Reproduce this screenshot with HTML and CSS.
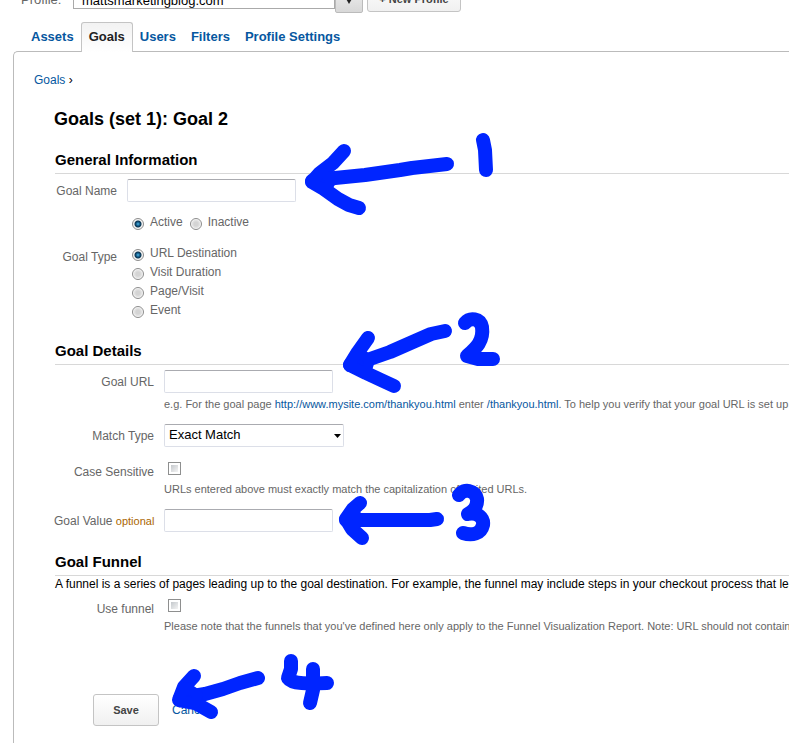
FILE: index.html
```html
<!DOCTYPE html>
<html lang="en">
<head>
    <meta charset="UTF-8">
    <meta name="viewport" content="width=device-width, initial-scale=1.0">
    <title>Goals (set 1): Goal 2</title>
    <link rel="stylesheet" href="styles.css">
</head>
<body>
    <div class="profile-bar">
        <label for="profile">Profile:</label>
        <div class="profile-picker">
            <input type="text" id="profile" value="mattsmarketingblog.com">
            <button type="button" class="picker-arrow" aria-label="Choose profile">
                <svg width="8" height="7" viewBox="0 0 8 7"><path d="M0 0h8L4 7z" fill="#222"/></svg>
            </button>
        </div>
        <button type="button" class="btn btn-new">+ New Profile</button>
    </div>

    <nav class="tabs">
        <a href="#">Assets</a>
        <a href="#" class="active">Goals</a>
        <a href="#">Users</a>
        <a href="#">Filters</a>
        <a href="#">Profile Settings</a>
    </nav>

    <main class="panel">
        <div class="breadcrumb"><a href="#">Goals</a> <span>›</span></div>

        <form class="goal-form">
            <h1>Goals (set 1): Goal 2</h1>

            <section class="general">
                <h2>General Information</h2>
                <div class="row">
                    <label class="row-label" for="goalName">Goal Name</label>
                    <div><input type="text" class="text-box" id="goalName"></div>
                </div>
                <div class="row">
                    <div class="radios radios-inline">
                        <label><input type="radio" name="status" checked> Active</label>
                        <label><input type="radio" name="status"> Inactive</label>
                    </div>
                </div>
                <div class="row">
                    <span class="row-label" id="goalType">Goal Type</span>
                    <div class="radios" role="radiogroup" aria-labelledby="goalType">
                        <label><input type="radio" name="type" checked> URL Destination</label>
                        <label><input type="radio" name="type"> Visit Duration</label>
                        <label><input type="radio" name="type"> Page/Visit</label>
                        <label><input type="radio" name="type"> Event</label>
                    </div>
                </div>
            </section>

            <section>
                <h2>Goal Details</h2>
                <div class="row">
                    <label class="row-label" for="goalUrl">Goal URL</label>
                    <div>
                        <input type="text" class="text-box" id="goalUrl">
                        <p class="hint">e.g. For the goal page <b>http://www.mysite.com/thankyou.html</b> enter <b>/thankyou.html</b>. To help you verify that your goal URL is set up correctly</p>
                    </div>
                </div>
                <div class="row">
                    <label class="row-label" for="matchType">Match Type</label>
                    <div>
                        <select class="select-box" id="matchType">
                            <option>Exact Match</option>
                            <option>Head Match</option>
                            <option>Regular Expression Match</option>
                        </select>
                    </div>
                </div>
                <div class="row">
                    <label class="row-label" for="caseSensitive">Case Sensitive</label>
                    <div>
                        <input type="checkbox" id="caseSensitive">
                        <p class="hint">URLs entered above must exactly match the capitalization of visited URLs.</p>
                    </div>
                </div>
                <div class="row">
                    <label class="row-label" for="goalValue">Goal Value <small>optional</small></label>
                    <div><input type="text" class="text-box" id="goalValue"></div>
                </div>
            </section>

            <section>
                <h2>Goal Funnel</h2>
                <p class="intro">A funnel is a series of pages leading up to the goal destination. For example, the funnel may include steps in your checkout process that lead to the goal.</p>
                <div class="row">
                    <label class="row-label" for="useFunnel">Use funnel</label>
                    <div>
                        <input type="checkbox" id="useFunnel">
                        <p class="hint">Please note that the funnels that you've defined here only apply to the Funnel Visualization Report. Note: URL should not contain the domain</p>
                    </div>
                </div>
            </section>

            <div class="actions">
                <button type="submit" class="btn btn-save">Save</button>
                <a href="#">Cancel</a>
            </div>
        </form>
    </main>

    <!-- Marker notes for the four steps -->
    <svg class="marker" width="520" height="730" viewBox="0 0 520 730" aria-hidden="true">
        <g>
            <path d="M447 164L412 168L400 170L365 175L335 178L312 181"/>
            <path d="M344 151L333 163L320 173L312 182L324 189L338 199L349 205L359 208"/>
            <path class="tip" d="M322 172L312 182L326 190L332 180z"/>
            <path d="M483 140L485 150L486 170"/>
        </g>
        <g>
            <path d="M445 331L431 334L415 341L390 352L370 359L350 365"/>
            <path d="M368 338L358 352L350 365L366 373L381 380L394 386"/>
            <path class="tip" d="M358 352L350 365L366 373L370 360z"/>
            <path d="M465 323C470 317 480 318 482 327C484 341 476 348 467 356L478 359L493 359"/>
        </g>
        <g>
            <path d="M437 519L430 520L346 520"/>
            <path d="M360 503L353 509L346 519L352 529L362 538"/>
            <path class="tip" d="M354 509L346 519L353 529L358 520z"/>
            <path d="M459 495C464 488 475 490 477 499C478 507 472 512 468 514C478 512 484 518 483 525C481 534 472 536 463 533"/>
        </g>
        <g>
            <path d="M258 678L240 683L223 689L205 694L180 698"/>
            <path d="M194 676L184 687L179 700L195 703L211 712"/>
            <path class="tip" d="M186 687L179 700L195 703L198 695z"/>
            <path d="M291 661L291 669L288 678C292 684 308 684 327 683"/>
            <path d="M313 669L313 690L310 703"/>
        </g>
    </svg>
</body>
</html>
```
FILE: styles.css
```css
* {
    box-sizing: border-box;
}

body {
    margin: 0;
    min-height: 100vh;
    display: flex;
    flex-direction: column;
    position: relative;
    overflow: hidden;
    background: #fff;
    color: #666;
    font-family: "Liberation Sans", Arial, sans-serif;
    font-size: 12px;
    line-height: 16px;
}

h1, h2, p {
    margin: 0;
}

a {
    color: #0657a0;
    text-decoration: none;
}

input, select, button {
    font-family: inherit;
    margin: 0;
}

/* Profile bar, tucked under the top edge */
.profile-bar {
    display: flex;
    align-items: flex-end;
    gap: 4px;
    margin-top: -18px;
    padding-left: 21px;
    height: 31px;
}

.profile-bar > label {
    width: 48px;
    height: 21px;
    font-size: 13px;
    line-height: 16px;
}

.profile-picker {
    display: flex;
    align-items: flex-start;
}

.profile-picker input {
    width: 262px;
    height: 27px;
    padding: 9px 8px 0;
    border: 1px solid #aaa;
    color: #000;
    font-size: 13px;
}

.picker-arrow {
    width: 28px;
    height: 31px;
    padding: 4px 0 0;
    border: 1px solid #bbb;
    border-radius: 0 0 2px 2px;
    background: linear-gradient(#f4f4f4, #d8d8d8);
}

.btn {
    border: 1px solid #c4c4c4;
    border-radius: 3px;
    background: linear-gradient(#fff, #f0f0f0);
    color: #444;
    font-size: 11px;
    font-weight: bold;
}

.btn-new {
    width: 94px;
    height: 30px;
    margin-bottom: 1px;
    padding: 4px 0 0;
}

/* Tabs */
.tabs {
    display: flex;
    margin: 9px 0 -1px 23px;
    position: relative;
    font-size: 13px;
    font-weight: bold;
}

.tabs a {
    height: 30px;
    padding: 6px 7px;
    border: 1px solid transparent;
    border-bottom: 0;
    margin-right: -1px;
}

.tabs a.active {
    border-color: #c4c4c4;
    border-radius: 3px 3px 0 0;
    background: linear-gradient(#f2f2f2, #fff);
    color: #222;
}

.panel {
    flex: 1;
    margin-left: 13px;
    padding: 20px 0 16px 20px;
    border: 1px solid #bbb;
    border-width: 1px 0 0 1px;
    border-radius: 5px 0 0 0;
    white-space: nowrap;
    overflow: hidden;
}

.breadcrumb span {
    color: #000;
}

.goal-form {
    margin: 20px 0 0 20px;
}

h1 {
    color: #000;
    font-size: 18px;
    line-height: 22px;
}

h2 {
    margin: 20px 0 5px 1px;
    padding-bottom: 3px;
    border-bottom: 1px solid #d8d8d8;
    color: #000;
    font-size: 15px;
    line-height: 20px;
}

/* Form rows */
.row {
    display: grid;
    grid-template-columns: 100px 1fr;
    column-gap: 10px;
}

.row + .row {
    margin-top: 13px;
}

.general .row {
    grid-template-columns: 63px 1fr;
}

.general .row + .row {
    margin-top: 12px;
}

.row-label {
    padding-top: 4px;
    text-align: right;
}

.row-label small {
    color: #a60;
    font-size: 11px;
}

.text-box, .select-box {
    display: block;
    height: 23px;
    border: 1px solid #dcdfe8;
    border-top-color: #aaabb0;
    border-radius: 2px;
    background: #fff;
}

.text-box {
    width: 169px;
}

.select-box {
    appearance: none;
    width: 180px;
    padding: 0 4px 2px;
    background: url("data:image/svg+xml,%3Csvg xmlns='http://www.w3.org/2000/svg' width='7' height='4'%3E%3Cpath d='M0 0h7L3.5 4z'/%3E%3C/svg%3E") no-repeat right 2px center;
    color: #000;
    font-size: 13px;
}

.radios {
    grid-column: 2;
    display: flex;
    flex-direction: column;
    padding-left: 5px;
}

.radios-inline {
    flex-direction: row;
    gap: 7px;
}

.radios label {
    display: flex;
    gap: 6px;
    height: 19px;
}

input[type="radio"] {
    appearance: none;
    width: 12px;
    height: 12px;
    margin-top: 4px;
    border: 1px solid #8c8c8c;
    border-radius: 50%;
    background: radial-gradient(circle, #d4d4d4 0 2px, #e6e6e6 4px, #fff 5px);
}

input[type="radio"]:checked {
    background: radial-gradient(circle, #4fb8e8 0, #10527e 2px, #0d3550 3px, #f4f4f4 4px);
}

input[type="checkbox"] {
    appearance: none;
    display: block;
    width: 13px;
    height: 13px;
    margin: 2px 4px 7px;
    border: 1px solid #8e8f8f;
    background: linear-gradient(135deg, #c4c8cc, #f4f4f4) content-box;
    padding: 2px;
}

.hint {
    margin-top: 4px;
    font-size: 11px;
    line-height: 14px;
}

.hint b {
    color: #0657a0;
    font-weight: normal;
}

section:last-of-type h2 {
    margin-bottom: 0;
}

.intro {
    margin: 0 0 5px 1px;
    color: #000;
}

.actions {
    display: flex;
    align-items: center;
    gap: 13px;
    margin: 61px 0 0 39px;
}

.btn-save {
    width: 66px;
    height: 32px;
}

/* Marker notes drawn over the form */
.marker {
    position: absolute;
    top: 0;
    left: 0;
    fill: none;
    stroke: #0025ff;
    stroke-width: 14;
    stroke-linecap: round;
    stroke-linejoin: round;
    pointer-events: none;
}

.marker .tip {
    fill: #0025ff;
    stroke-width: 10;
}
```
